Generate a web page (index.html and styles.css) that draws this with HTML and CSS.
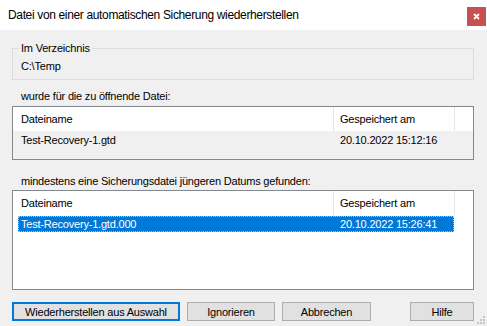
FILE: index.html
```html
<!DOCTYPE html>
<html lang="de">
<head>
    <meta charset="UTF-8">
    <title>Datei von einer automatischen Sicherung wiederherstellen</title>
    <link rel="stylesheet" href="styles.css">
</head>
<body>
    <div class="window">
        <div class="titlebar">
            <span class="title">Datei von einer automatischen Sicherung wiederherstellen</span>
            <div class="close-btn">
                <svg width="7" height="7" viewBox="0 0 7 7">
                    <path d="M1 1 L6 6 M6 1 L1 6" stroke="#fff" stroke-width="1.8"/>
                </svg>
            </div>
        </div>

        <div class="content">
            <fieldset class="group">
                <legend>Im Verzeichnis</legend>
                <div class="path">C:\Temp</div>
            </fieldset>

            <div class="label first">wurde für die zu öffnende Datei:</div>
            <div class="list list-disabled short">
                <div class="list-head">
                    <span class="col-name">Dateiname</span>
                    <span class="col-date">Gespeichert am</span>
                    <span class="col-rest"></span>
                </div>
                <div class="row">
                    <span class="cell-name">Test-Recovery-1.gtd</span>
                    <span class="cell-date">20.10.2022 15:12:16</span>
                </div>
            </div>

            <div class="label second">mindestens eine Sicherungsdatei jüngeren Datums gefunden:</div>
            <div class="list tall">
                <div class="list-head">
                    <span class="col-name">Dateiname</span>
                    <span class="col-date">Gespeichert am</span>
                    <span class="col-rest"></span>
                </div>
                <div class="row selected">
                    <span class="cell-name">Test-Recovery-1.gtd.000</span>
                    <span class="cell-date">20.10.2022 15:26:41</span>
                </div>
            </div>

            <div class="buttons">
                <button class="btn btn-default btn-restore">Wiederherstellen aus Auswahl</button>
                <button class="btn btn-ignore">Ignorieren</button>
                <button class="btn btn-cancel">Abbrechen</button>
                <button class="btn btn-help">Hilfe</button>
            </div>
        </div>

        <!-- size grip -->
        <svg class="grip" width="8" height="8" viewBox="0 0 8 8">
            <rect x="6" y="0" width="2" height="2" fill="#c6c6c6"/>
            <rect x="3" y="3" width="2" height="2" fill="#c6c6c6"/>
            <rect x="6" y="3" width="2" height="2" fill="#c6c6c6"/>
            <rect x="0" y="6" width="2" height="2" fill="#c6c6c6"/>
            <rect x="3" y="6" width="2" height="2" fill="#c6c6c6"/>
            <rect x="6" y="6" width="2" height="2" fill="#c6c6c6"/>
        </svg>
    </div>
</body>
</html>
```

FILE: styles.css
```css
* {
    margin: 0;
    padding: 0;
    box-sizing: border-box;
}

body {
    font-family: "Liberation Sans", Arial, sans-serif;
    font-size: 11px;
    line-height: 13px;
    letter-spacing: -0.2px;
    color: #000;
    background: #f0f0f0;
    width: 487px;
    height: 326px;
    overflow: hidden;
}

.window {
    position: relative;
    height: 326px;
}

.titlebar {
    height: 30px;
    background: #fff;
    display: flex;
    align-items: flex-start;
    padding-left: 8px;
}

.title {
    flex: 1;
    font-size: 12px;
    line-height: 14px;
    letter-spacing: -0.35px;
    padding-top: 8px;
}

.close-btn {
    width: 19px;
    height: 19px;
    margin-top: 7px;
    margin-right: 1px;
    background: #c75050;
    display: flex;
    align-items: center;
    justify-content: center;
}

.content {
    padding: 12px 13px 0 12px;
}

.group {
    border: 1px solid #dcdcdc;
    padding: 5px 0 6px 8px;
}

.group legend {
    padding: 0 2px;
    margin-left: -2px;
    line-height: 13px;
}

.label {
    padding-left: 9px;
}

.label.first {
    margin-top: 10px;
    margin-bottom: 3px;
}

.label.second {
    margin-top: 15px;
    margin-bottom: 2px;
}

.list {
    border: 1px solid #828790;
    background: #fff;
}

.list-disabled {
    background: #f0f0f0;
}

.list.short {
    height: 54px;
}

.list.tall {
    height: 100px;
}

.list-head {
    height: 24px;
    display: flex;
    align-items: center;
    background: #fff;
}

.list-head span {
    height: 24px;
    display: flex;
    align-items: center;
    border-right: 1px solid #e5e5e5;
}

.col-name {
    width: 321px;
    padding-left: 8px;
}

.col-date {
    width: 121px;
    padding-left: 6px;
}

.list-head .col-rest {
    flex: 1;
    border-right: none;
}

.row {
    display: flex;
    align-items: center;
    width: 436px;
    height: 16px;
    margin: 1px 0 0 5px;
}

.cell-name {
    width: 316px;
    padding-left: 3px;
}

.cell-date {
    padding-left: 6px;
}

.row.selected {
    background: #0078d7;
    color: #fff;
    outline: 1px dotted #f3b27a;
    outline-offset: -1px;
}

.buttons {
    display: flex;
    gap: 7px;
    margin-top: 12px;
}

.btn {
    height: 19px;
    font-family: "Liberation Sans", Arial, sans-serif;
    font-size: 11px;
    letter-spacing: -0.2px;
    color: #000;
    background: #e1e1e1;
    border: 1px solid #adadad;
}

.btn-default {
    border: 2px solid #0078d7;
}

.btn-restore {
    width: 168px;
}

.btn-ignore {
    width: 88px;
}

.btn-cancel {
    width: 89px;
}

.btn-help {
    width: 64px;
    margin-left: auto;
}

.grip {
    position: absolute;
    right: 2px;
    bottom: 2px;
}
```
